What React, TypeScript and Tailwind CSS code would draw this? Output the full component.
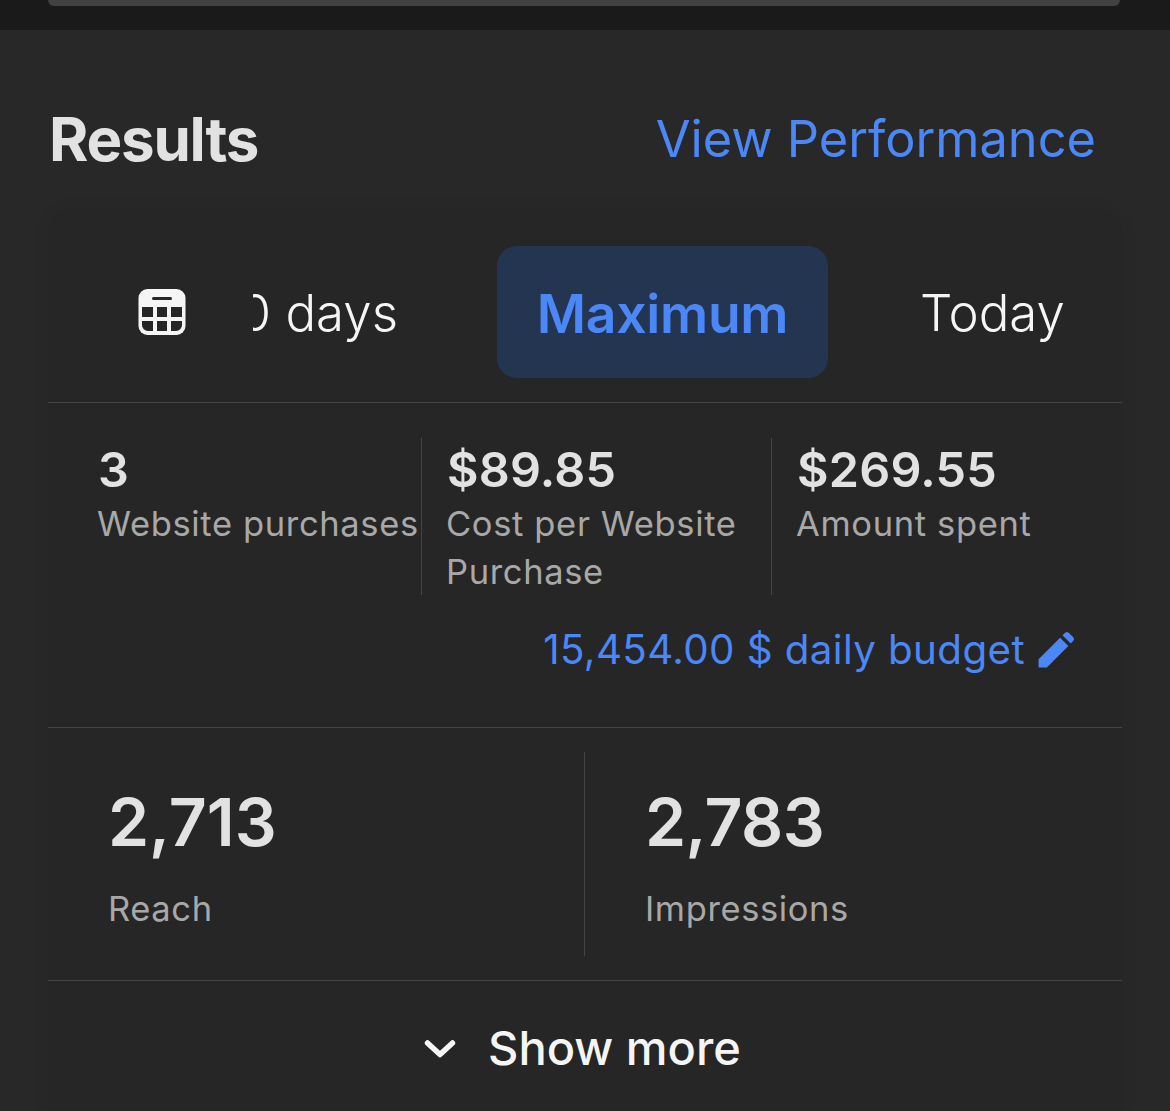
import React from "react";

const Stat = ({ value, label, className = "" }: { value: string; label: React.ReactNode; className?: string }) => (
  <div className={className}>
    <div className="pt-[8px] pl-[1px] text-[48.5px] leading-[48px] font-semibold tracking-[0.2px] text-[#e2e2e2]">{value}</div>
    <div className="mt-[6px] text-[34.5px] leading-[48px] tracking-[0.65px] text-[#a8a8a8] whitespace-nowrap">{label}</div>
  </div>
);

export default function App() {
  return (
    <div className="w-[1170px] h-[1111px] overflow-hidden bg-[#282828] font-['Inter',sans-serif]">
      <div className="h-[30px] bg-[#1a1a1a] px-[48px]">
        <div className="h-[6px] rounded-b-[14px] bg-[#414141] mr-[2px]" />
      </div>

      <div className="flex items-center justify-between h-[72px] mt-[73px] pl-[49px] pr-[74px]">
        <div className="text-[60px] font-bold tracking-[-1.2px] text-[#e2e2e2]">Results</div>
        <div className="text-[50.5px] text-[#4c87f7]">View Performance</div>
      </div>

      <div className="mx-[48px] mt-[34px] w-[1074px] rounded-t-[24px] bg-[#262626] shadow-[0_0_18px_rgba(0,0,0,0.06)]">
        <div className="flex items-start h-[194px] pt-[37px] border-b border-[#444444]">
          <div className="flex items-center h-[132px] shrink-0">
            <svg className="ml-[90px] shrink-0" width="48" height="46" viewBox="0 0 48 46">
              <rect x="0.5" y="0" width="47" height="46" rx="9" fill="#f5f5f5" />
              <rect x="14" y="8" width="20" height="3" rx="1.5" fill="#262626" />
              <path d="M4 18h11v10H4zM19 18h10v10H19zM33 18h11v10H33zM4 32h11v10H10a6 6 0 0 1-6-6zM19 32h10v10H19zM33 32h11v4a6 6 0 0 1-6 6h-5z" fill="#262626" />
            </svg>
            <div className="ml-[67px] w-[145px] shrink-0 overflow-hidden flex justify-end">
              <span className="pt-[2px] text-[51px] font-light text-[#f5f5f5] whitespace-nowrap">30 days</span>
            </div>
          </div>
          <div className="ml-[99px] w-[331px] h-[132px] pt-[4px] shrink-0 rounded-[20px] bg-[#233550] flex items-center justify-center text-[53.500px] font-semibold tracking-[-0.3px] text-[#4c87f7]">
            Maximum
          </div>
          <div className="flex items-center h-[132px] pt-[2px] ml-[92px] text-[51px] font-light text-[#f5f5f5] whitespace-nowrap">Today</div>
        </div>

        <div className="h-[325px] border-b border-[#444444] pt-[35px]">
          <div className="flex h-[157px]">
            <Stat className="w-[373px] pl-[49px]" value="3" label="Website purchases" />
            <Stat className="w-[350px] pl-[24px] border-l border-[#444444]" value="$89.85" label={<>Cost per Website<br />Purchase</>} />
            <Stat className="pl-[24px] border-l border-[#444444]" value="$269.55" label="Amount spent" />
          </div>
          <div className="flex items-center justify-end h-[48px] mt-[31px] pr-[47px] gap-[12px] text-[40.3px] tracking-[0.4px] text-[#4c87f7]">
            <span>15,454.00 $ daily budget</span>
            <svg width="38" height="38" viewBox="0 0 24 24" fill="#4c87f7" className="shrink-0">
              <path d="M1 23v-5.2L14.6 4.2l5.2 5.2L6.2 23zM16.1 2.7l1.7-1.6a1.6 1.6 0 0 1 2.2 0l2.9 2.9a1.6 1.6 0 0 1 0 2.2l-1.6 1.7z" />
            </svg>
          </div>
        </div>

        <div className="flex h-[253px] border-b border-[#444444] pt-[24px]">
          <div className="w-[537px] h-[204px] pl-[60px] pt-[35px] border-r border-[#444444]">
            <div className="text-[66px] leading-[70px] font-semibold text-[#e2e2e2]">2,713</div>
            <div className="mt-[28px] text-[34.5px] leading-[48px] tracking-[0.6px] text-[#a8a8a8]">Reach</div>
          </div>
          <div className="pl-[60px] pt-[35px]">
            <div className="text-[66px] leading-[70px] font-semibold tracking-[-0.6px] text-[#e2e2e2]">2,783</div>
            <div className="mt-[28px] text-[34.5px] leading-[48px] tracking-[0.6px] text-[#a8a8a8]">Impressions</div>
          </div>
        </div>

        <div className="flex items-center justify-center gap-[32px] h-[135px] pr-[5px] text-[#f5f5f5]">
          <svg width="32" height="20" viewBox="0 0 32 20" fill="none" stroke="#f5f5f5" strokeWidth="5.5" strokeLinecap="round" strokeLinejoin="round">
            <path d="M3.5 4L16 15.5 28.500 4" />
          </svg>
          <span className="text-[47px] font-medium">Show more</span>
        </div>
      </div>
    </div>
  );
}
